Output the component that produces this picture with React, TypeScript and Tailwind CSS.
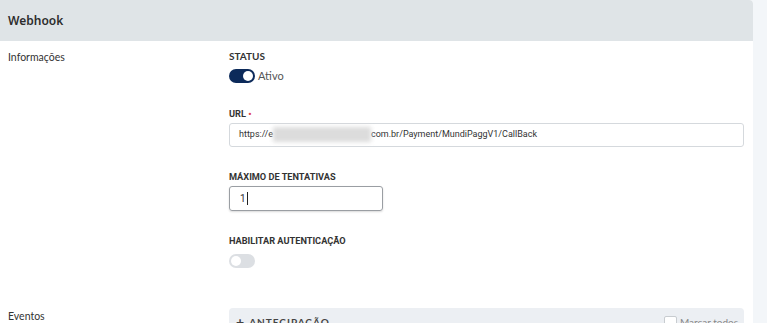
import React from "react";

const Toggle: React.FC<{ on: boolean }> = ({ on }) => (
    <div
        className={
            "relative w-[26px] h-[14px] rounded-full " + (on ? "bg-[#0c2a5a]" : "bg-[#dcdfe3]")
        }
    >
        <div
            className={
                "absolute top-[2px] w-[10px] h-[10px] rounded-full bg-white " +
                (on ? "right-[2px]" : "left-[2px]")
            }
        />
    </div>
);

const Label: React.FC<{ children: React.ReactNode; className?: string }> = ({ children, className }) => (
    <div className={"text-[9.2px] font-bold text-[#333] uppercase leading-[12px] " + (className || "")}>
        {children}
    </div>
);

export default function App() {
    return (
        <div className="w-[767px] h-[323px] overflow-hidden bg-[#f3f6f9]">
            <div className="w-[753px] h-[323px] bg-white rounded-tr-[4px] overflow-hidden">
                {/* header */}
                <div className="h-[41px] bg-[#dfe4e7] flex items-center px-2 font-['Noto_Sans',sans-serif] text-[12px] font-semibold text-[#2d2d2d]">
                    Webhook
                </div>

                {/* Informações */}
                <div className="flex">
                    <div className="w-[229px] pl-2 pt-[9px] font-['Lato',sans-serif] text-[10.5px] text-[#333]">
                        Informações
                    </div>
                    <div className="flex-1 pr-[9px] pt-[9px]">
                        <div className="font-['Lato',sans-serif] text-[10px] font-bold text-[#333] leading-[12px]">
                            STATUS
                        </div>
                        <div className="flex items-center gap-[3px] mt-[6px]">
                            <Toggle on />
                            <span className="font-['Lato',sans-serif] text-[11px] text-[#555]">Ativo</span>
                        </div>

                        <div className="mt-[23px] font-['Roboto',sans-serif]">
                            <Label>
                                URL <span className="text-[#e0434f]">•</span>
                            </Label>
                            <div className="mt-[3px] h-[24px] border border-[#d5d9dd] rounded-[3px] flex items-center pl-[9px] text-[9px] text-[#333]">
                                <span>https://e</span>
                                <span className="inline-block w-[98px] h-[15px] bg-[#dcdcdc] blur-[2px]" />
                                <span>com.br/Payment/MundiPaggV1/CallBack</span>
                            </div>

                            <Label className="mt-[24px]">Máximo de tentativas</Label>
                            <div className="mt-[3px] w-[154px] h-[25px] border border-[#9a9ea3] rounded-[3px] shadow-[0_1px_2px_rgba(0,0,0,0.15)] flex items-center pl-[10px] text-[10px] text-[#333]">
                                1<span className="inline-block w-px h-[13px] bg-[#222] ml-[1px]" />
                            </div>

                            <Label className="mt-[24px]">Habilitar autenticação</Label>
                            <div className="mt-[7px]">
                                <Toggle on={false} />
                            </div>
                        </div>
                    </div>
                </div>

                {/* Eventos */}
                <div className="flex mt-[40px]">
                    <div className="w-[229px] pl-2 pt-[1px] font-['Lato',sans-serif] text-[10.5px] leading-[14px] text-[#333]">
                        Eventos
                    </div>
                    <div className="flex-1 pr-[9px]">
                        <div className="h-[30px] bg-[#eceff3] rounded-t-[4px] flex items-start justify-between pl-[7px] pr-[6px] pt-[7px]">
                            <div className="flex items-center gap-[4px] font-['Lato',sans-serif] text-[10px] font-bold tracking-[1px] text-[#444]">
                                <span className="text-[14px] leading-none">+</span>
                                ANTECIPAÇÃO
                            </div>
                            <div className="flex items-center gap-[3px] font-['Lato',sans-serif] text-[10px] text-[#888]">
                                <span className="inline-block w-[13px] h-[13px] border border-[#c8ccd0] rounded-[2px] bg-white" />
                                Marcar todos
                            </div>
                        </div>
                    </div>
                </div>
            </div>
        </div>
    );
}
